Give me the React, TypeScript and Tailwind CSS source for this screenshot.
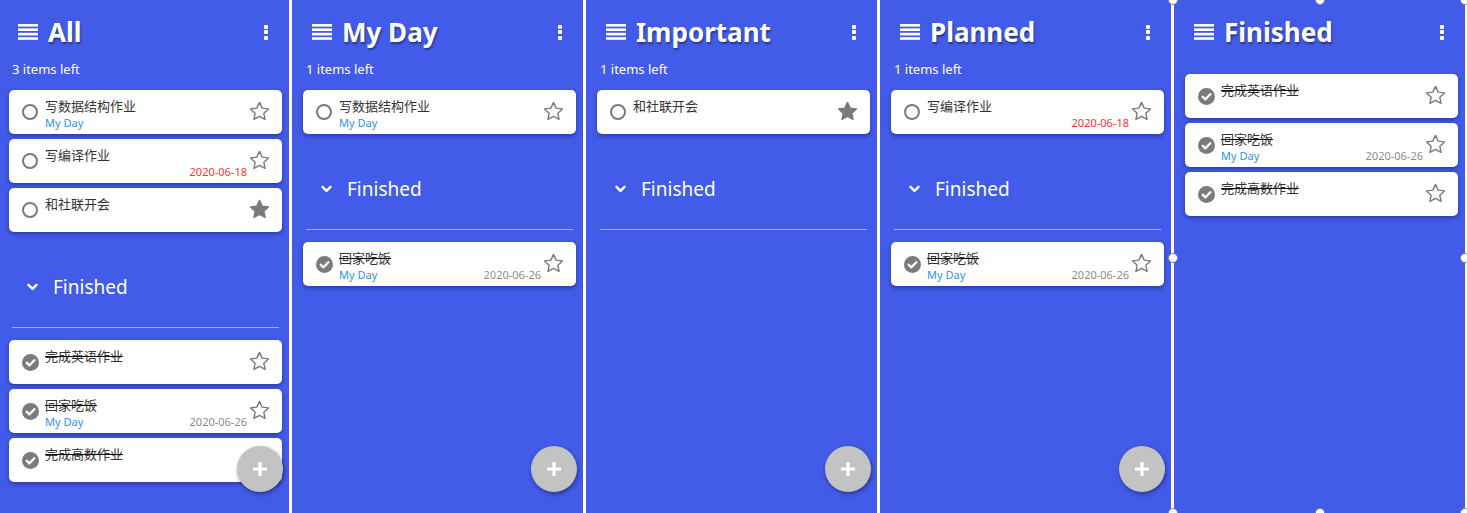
import React from "react";

type Todo = {
  text: string;
  myDay?: boolean;
  date?: string;
  overdue?: boolean;
  starred?: boolean;
};

type Panel = {
  title: string;
  left?: string;
  todo: Todo[];
  done: Todo[];
  section: boolean;
  fab: boolean;
  handles?: boolean;
};

const eatHome: Todo = { text: "回家吃饭", myDay: true, date: "2020-06-26" };

const panels: Panel[] = [
  {
    title: "All",
    left: "3 items left",
    todo: [
      { text: "写数据结构作业", myDay: true },
      { text: "写编译作业", date: "2020-06-18", overdue: true },
      { text: "和社联开会", starred: true },
    ],
    done: [{ text: "完成英语作业" }, eatHome, { text: "完成高数作业" }],
    section: true,
    fab: true,
  },
  {
    title: "My Day",
    left: "1 items left",
    todo: [{ text: "写数据结构作业", myDay: true }],
    done: [eatHome],
    section: true,
    fab: true,
  },
  {
    title: "Important",
    left: "1 items left",
    todo: [{ text: "和社联开会", starred: true }],
    done: [],
    section: true,
    fab: true,
  },
  {
    title: "Planned",
    left: "1 items left",
    todo: [{ text: "写编译作业", date: "2020-06-18", overdue: true }],
    done: [eatHome],
    section: true,
    fab: true,
  },
  {
    title: "Finished",
    todo: [],
    done: [{ text: "完成英语作业" }, eatHome, { text: "完成高数作业" }],
    section: false,
    fab: false,
    handles: true,
  },
];

function Bars() {
  return (
    <svg width="20" height="16" viewBox="0 0 20 16" fill="#fff">
      <rect x="0" y="0" width="20" height="2.6" />
      <rect x="0" y="4.4" width="20" height="2.6" />
      <rect x="0" y="8.8" width="20" height="2.6" />
      <rect x="0" y="13.2" width="20" height="2.6" />
    </svg>
  );
}

function Kebab() {
  return (
    <div className="flex flex-col gap-[1.5px]">
      <span className="w-[4px] h-[4px] rounded-[1px] bg-white" />
      <span className="w-[4px] h-[4px] rounded-[1px] bg-white" />
      <span className="w-[4px] h-[4px] rounded-[1px] bg-white" />
    </div>
  );
}

function Star({ filled }: { filled?: boolean }) {
  return (
    <svg width="21" height="20" viewBox="0 0 24 23">
      <path
        d="M12 1.6l3.1 6.6 7.2.9-5.3 5 1.4 7.1L12 17.7l-6.4 3.5L7 14.1l-5.3-5 7.2-.9z"
        fill={filled ? "#7a7a7a" : "none"}
        stroke="#7a7a7a"
        strokeWidth="1.6"
        strokeLinejoin="round"
      />
    </svg>
  );
}

function Check({ done }: { done: boolean }) {
  if (!done)
    return (
      <span className="w-[16px] h-[16px] rounded-full border-[2.5px] border-[#7b7b7b] shrink-0" />
    );
  return (
    <svg width="17" height="17" viewBox="0 0 16 16" className="shrink-0">
      <circle cx="8" cy="8" r="8" fill="#7b7b7b" />
      <path
        d="M4.4 8.2l2.5 2.5 4.7-4.9"
        fill="none"
        stroke="#fff"
        strokeWidth="2.1"
        strokeLinecap="round"
        strokeLinejoin="round"
      />
    </svg>
  );
}

function Card({ item, done }: { item: Todo; done: boolean }) {
  const sub = item.myDay || item.date;
  return (
    <div className="h-[44px] rounded-[5px] bg-white shadow-[0_2px_4px_rgba(0,0,30,0.35)] flex">
      <div className="ml-[13px] w-[17px] flex items-center">
        <Check done={done} />
      </div>
      <div className="ml-[6px] w-[202px] pt-[7px]">
        <div
          className={
            "text-[13px] leading-[18px] text-[#333] " +
            (done ? "line-through decoration-[#111]" : "")
          }
        >
          {item.text}
        </div>
        {sub && (
          <div className="flex justify-between text-[11px] leading-[14px] mt-[1px]">
            <span className="text-[#2f8ff5]">{item.myDay ? "My Day" : ""}</span>
            <span className={item.overdue ? "text-[#ff3333]" : "text-[#8c8c8c]"}>
              {item.date}
            </span>
          </div>
        )}
      </div>
      <div className="ml-[2px] w-[21px] pt-[11px]">
        <Star filled={item.starred} />
      </div>
    </div>
  );
}

function Handle({ className }: { className: string }) {
  return (
    <span
      className={
        "absolute w-[10px] h-[10px] rounded-full bg-white border-[1.5px] border-[#8a8a8a] " +
        className
      }
    />
  );
}

function PanelView({ p }: { p: Panel }) {
  return (
    <div className="relative w-[291px] h-[513px] shrink-0 bg-[#425be8] pl-[11px] pr-[7px]">
      <div className="mt-[16px] h-[32px] flex items-center pl-[9px] pr-[14px]">
        <Bars />
        <span className="ml-[10px] text-[26px] font-bold text-white leading-[32px] [text-shadow:1px_2px_2px_rgba(0,0,0,0.4)]">
          {p.title}
        </span>
        <div className="ml-auto">
          <Kebab />
        </div>
      </div>
      {p.left ? (
        <div className="mt-[13px] pl-[3px] text-[13px] leading-[16px] text-white">{p.left}</div>
      ) : null}
      <div className={(p.left ? "mt-[13px]" : "mt-[26px]") + " flex flex-col gap-[5px]"}>
        {(p.section ? p.todo : p.done).map((t, i) => (
          <Card key={i} item={t} done={!p.section} />
        ))}
      </div>
      {p.section && (
        <>
          <div className="mt-[35px] h-[40px] flex items-center pl-[18px]">
            <svg width="11" height="8" viewBox="0 0 11 8">
              <path
                d="M1.5 1.8l4 4 4-4"
                fill="none"
                stroke="#fff"
                strokeWidth="2.4"
                strokeLinecap="round"
                strokeLinejoin="round"
              />
            </svg>
            <span className="ml-[15px] text-[19px] text-white leading-[24px]">Finished</span>
          </div>
          <div className="mt-[20px] mx-[3px] h-px bg-white/50" />
          <div className="mt-[12px] flex flex-col gap-[5px]">
            {p.done.map((t, i) => (
              <Card key={i} item={t} done />
            ))}
          </div>
        </>
      )}
      {p.fab && (
        <div className="absolute right-[6px] bottom-[21px] w-[46px] h-[46px] rounded-full bg-[#c3c3c3] shadow-[1px_2px_4px_rgba(0,0,0,0.4)] flex items-center justify-center">
          <svg width="18" height="18" viewBox="0 0 18 18">
            <path d="M9 2v14M2 9h14" stroke="#fff" strokeWidth="3.2" />
          </svg>
        </div>
      )}
      {p.handles && (
        <>
          <Handle className="-left-[6px] -top-[5px]" />
          <Handle className="left-[141px] -top-[5px]" />
          <Handle className="-right-[5px] -top-[5px]" />
          <Handle className="-left-[6px] top-[253px]" />
          <Handle className="-right-[5px] top-[253px]" />
          <Handle className="-left-[6px] -bottom-[5px]" />
          <Handle className="left-[141px] -bottom-[5px]" />
          <Handle className="-right-[5px] -bottom-[5px]" />
        </>
      )}
    </div>
  );
}

export default function App() {
  return (
    <div className="w-[1467px] h-[513px] overflow-hidden bg-white font-['Noto_Sans','Noto_Sans_CJK_SC',sans-serif]">
      <div className="flex gap-[3px] -ml-[2px]">
        {panels.map((p) => (
          <PanelView key={p.title} p={p} />
        ))}
      </div>
    </div>
  );
}
